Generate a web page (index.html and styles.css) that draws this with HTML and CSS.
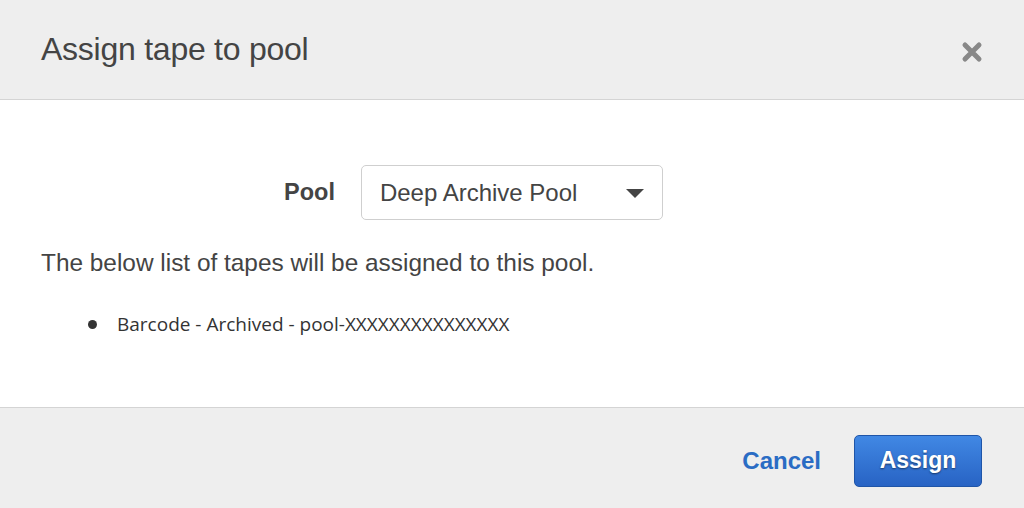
FILE: index.html
```html
<!DOCTYPE html>
<html>
<head>
<meta charset="utf-8">
<link rel="stylesheet" href="styles.css">
</head>
<body>
<div class="modal">
  <div class="header">
    <h1 class="title">Assign tape to pool</h1>
    <svg class="close" width="22" height="22" viewBox="0 0 22 22"><path d="M4 4 L18 18 M18 4 L4 18" stroke="#888" stroke-width="5" stroke-linecap="round"/></svg>
  </div>
  <div class="body">
    <div class="field">
      <span class="label">Pool</span>
      <div class="select">
        <span>Deep Archive Pool</span>
        <svg class="caret" width="18" height="9" viewBox="0 0 18 9"><path d="M0 0 H18 L9 9 Z" fill="#444"/></svg>
      </div>
    </div>
    <p class="desc">The below list of tapes will be assigned to this pool.</p>
    <ul class="tapes">
      <li><span class="dot"></span>Barcode - Archived - pool-XXXXXXXXXXXXXXX</li>
    </ul>
  </div>
  <div class="footer">
    <a class="cancel">Cancel</a>
    <button class="assign">Assign</button>
  </div>
</div>
</body>
</html>
```
FILE: styles.css
```css
html, body { margin: 0; padding: 0; }
body { width: 1024px; height: 508px; overflow: hidden; font-family: "Liberation Sans", Arial, sans-serif; color: #444; background: #fff; }
.modal { display: flex; flex-direction: column; height: 508px; }
.header { height: 100px; background: #eeeeee; border-bottom: 1px solid #d4d4d4; display: flex; align-items: center; justify-content: space-between; padding: 0 41px 0 41px; box-sizing: border-box; flex: none; }
.title { margin: 0; font-size: 32px; font-weight: normal; color: #444; letter-spacing: -0.25px; }
.close { display: block; margin-right: 0; margin-top: 4px; }
.body { flex: 1; padding: 0 41px; }
.field { display: flex; align-items: center; margin-top: 65px; margin-left: 243px; }
.label { font-weight: bold; font-size: 23.5px; color: #444; margin-right: 26px; }
.select { width: 302px; height: 55px; box-sizing: border-box; border: 1px solid #cfcfcf; border-radius: 5px; display: flex; align-items: center; justify-content: space-between; padding: 0 18px 0 18px; font-size: 24px; color: #444; }
.caret { display: block; margin-top: 2px; }
.desc { margin: 29px 0 0; font-size: 24.4px; color: #444; }
.tapes { margin: 34px 0 0; padding-left: 47px; list-style: none; font-family: "Open Sans", sans-serif; font-size: 19px; color: #333; }
.tapes li { display: flex; align-items: center; }
.dot { width: 9px; height: 9px; border-radius: 50%; background: #333; margin-right: 20px; flex: none; }
.footer { height: 101px; background: #eeeeee; border-top: 1px solid #d4d4d4; display: flex; align-items: center; justify-content: flex-end; padding: 5px 42px 0 0; box-sizing: border-box; flex: none; }
.cancel { font-weight: bold; font-size: 24px; color: #2a6cc4; margin-right: 33px; }
.assign { width: 128px; height: 52px; border: 1px solid #1f55a8; border-radius: 5px; background: linear-gradient(#4188e4, #2863c4); color: #fff; font-family: "Liberation Sans", Arial, sans-serif; font-weight: bold; font-size: 23px; text-shadow: 0 1px 2px rgba(0,0,0,0.5); padding: 0; }
```
